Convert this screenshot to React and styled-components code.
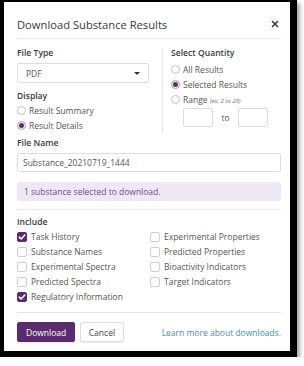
import React from "react";
import styled, { createGlobalStyle } from "styled-components";

const GlobalStyle = createGlobalStyle`
  html, body {
    margin: 0;
    padding: 0;
    background: #ffffff;
  }
  body {
    font-family: "Open Sans", "Liberation Sans", sans-serif;
    color: #555;
  }
`;

const leftOptions = [
  { label: "Task History", checked: true },
  { label: "Substance Names" },
  { label: "Experimental Spectra" },
  { label: "Predicted Spectra" },
  { label: "Regulatory Information", checked: true },
];

const rightOptions = [
  { label: "Experimental Properties" },
  { label: "Predicted Properties" },
  { label: "Bioactivity Indicators" },
  { label: "Target Indicators" },
];

function Radio({ checked, children }) {
  return (
    <RadioRow>
      <RadioDot $checked={checked} />
      <span>{children}</span>
    </RadioRow>
  );
}

function Check({ checked, children }) {
  return (
    <CheckRow>
      <Box $checked={checked}>
        {checked && (
          <svg width="8" height="8" viewBox="0 0 8 8">
            <path d="M1.3 4.2 L3.2 6 L6.8 2" fill="none" stroke="#fff" strokeWidth="1.6" strokeLinecap="round" strokeLinejoin="round" />
          </svg>
        )}
      </Box>
      <span>{children}</span>
    </CheckRow>
  );
}

export default function App() {
  return (
    <>
      <GlobalStyle />
      <Frame>
        <Dialog>
          <Header>
            <Title>Download Substance Results</Title>
            <Close>
              <svg width="8" height="8" viewBox="0 0 8 8">
                <path d="M1 1 L7 7 M7 1 L1 7" stroke="#333" strokeWidth="1.5" />
              </svg>
            </Close>
          </Header>

          <Columns>
            <LeftCol>
              <Label>File Type</Label>
              <Select>
                <span>PDF</span>
                <Caret />
              </Select>
              <Label $top={6}>Display</Label>
              <Radio>Result Summary</Radio>
              <Radio checked>Result Details</Radio>
            </LeftCol>
            <RightCol>
              <Label>Select Quantity</Label>
              <Options>
                <Radio>All Results</Radio>
                <Radio checked>Selected Results</Radio>
                <Radio>
                  Range <Hint>(ex. 2 to 20)</Hint>
                </Radio>
              </Options>
              <RangeRow>
                <RangeBox />
                <To>to</To>
                <RangeBox />
              </RangeRow>
            </RightCol>
          </Columns>

          <Label $top={3}>File Name</Label>
          <TextInput>Substance_20210719_1444</TextInput>
          <Notice>1 substance selected to download.</Notice>
          <Rule $top={8} />

          <Label $top={5}>Include</Label>
          <CheckGrid>
            <CheckCol>
              {leftOptions.map((o, i) => (
                <Check key={i} checked={o.checked}>{o.label}</Check>
              ))}
            </CheckCol>
            <CheckCol>
              {rightOptions.map((o, i) => (
                <Check key={i} checked={o.checked}>{o.label}</Check>
              ))}
            </CheckCol>
          </CheckGrid>
          <Rule $top={8} />

          <Footer>
            <PrimaryBtn>Download</PrimaryBtn>
            <Btn>Cancel</Btn>
            <Link>Learn more about downloads.</Link>
          </Footer>
        </Dialog>
      </Frame>
    </>
  );
}

const Frame = styled.div`
  width: 286px;
  height: 349px;
  border-style: solid;
  border-color: #000;
  border-width: 2px 7px 6px 4px;
  box-shadow: 3px 3px 4px rgba(0, 0, 0, 0.35);
`;

const Dialog = styled.div`
  height: 100%;
  background: #fff;
  padding: 0 9px 0 13px;
  box-sizing: border-box;
  display: flex;
  flex-direction: column;
`;

const Header = styled.div`
  height: 28px;
  padding-top: 8px;
  display: flex;
  align-items: center;
  justify-content: space-between;
  border-bottom: 1px solid #e6e6e6;
`;

const Title = styled.div`
  font-size: 11.2px;
  color: #3a3a3a;
`;

const Close = styled.div`
  display: flex;
  margin-right: 2px;
`;

const Columns = styled.div`
  display: flex;
  padding-top: 7px;
  height: 87px;
`;

const LeftCol = styled.div`
  width: 145px;
  display: flex;
  flex-direction: column;
`;

const RightCol = styled.div`
  flex: 1;
  border-left: 1px solid #e8e8e8;
  margin-top: 2px;
  padding-left: 8px;
  display: flex;
  flex-direction: column;
`;

const Label = styled.div`
  font-size: 8.6px;
  font-weight: 600;
  color: #3a3a3a;
  height: 14px;
  line-height: 14px;
  margin-top: ${(p) => p.$top || 0}px;
  ${RightCol} & {
    margin-top: -2px;
  }
`;

const Select = styled.div`
  margin-top: 3px;
  width: 132px;
  height: 20px;
  box-sizing: border-box;
  border: 1px solid #ddd;
  border-radius: 2px;
  padding: 0 8px;
  display: flex;
  align-items: center;
  justify-content: space-between;
  font-size: 8.5px;
  color: #555;
`;

const Caret = styled.span`
  width: 0;
  height: 0;
  border-left: 3px solid transparent;
  border-right: 3px solid transparent;
  border-top: 3px solid #333;
`;

const Options = styled.div`
  margin-top: 2px;
  display: flex;
  flex-direction: column;
`;

const RadioRow = styled.div`
  height: 15px;
  display: flex;
  align-items: center;
  gap: 3px;
  font-size: 8.5px;
  color: #555;
`;

const RadioDot = styled.span`
  width: 9px;
  height: 9px;
  box-sizing: border-box;
  border-radius: 50%;
  border: 1px solid #c4c4c4;
  background: ${(p) => (p.$checked ? "#5b2b70" : "#fff")};
  box-shadow: ${(p) => (p.$checked ? "inset 0 0 0 1px #fff" : "none")};
`;

const Hint = styled.i`
  font-size: 6px;
  color: #666;
`;

const RangeRow = styled.div`
  margin-top: 1px;
  padding-left: 12px;
  display: flex;
  align-items: center;
`;

const RangeBox = styled.div`
  width: 30px;
  height: 19px;
  box-sizing: border-box;
  border: 1px solid #ddd;
  border-radius: 2px;
`;

const To = styled.span`
  width: 25px;
  text-align: center;
  font-size: 8.5px;
  color: #555;
`;

const TextInput = styled.div`
  margin-top: 3px;
  height: 19px;
  box-sizing: border-box;
  border: 1px solid #ddd;
  border-radius: 2px;
  padding-left: 5px;
  display: flex;
  align-items: center;
  font-size: 8.5px;
  color: #555;
`;

const Notice = styled.div`
  margin-top: 10px;
  height: 19px;
  background: #efe7f3;
  border-radius: 2px;
  padding-left: 7px;
  display: flex;
  align-items: center;
  font-size: 8.5px;
  color: #6f4f83;
`;

const Rule = styled.div`
  margin-top: ${(p) => p.$top}px;
  height: 1px;
  background: #e6e6e6;
`;

const CheckGrid = styled.div`
  display: grid;
  grid-template-columns: 133px 1fr;
`;

const CheckCol = styled.div`
  display: flex;
  flex-direction: column;
`;

const CheckRow = styled.div`
  height: 15px;
  display: flex;
  align-items: center;
  gap: 4px;
  font-size: 8.5px;
  color: #555;
`;

const Box = styled.span`
  width: 10px;
  height: 10px;
  box-sizing: border-box;
  border-radius: 2px;
  border: 1px solid ${(p) => (p.$checked ? "#5b2b70" : "#cfcfcf")};
  background: ${(p) => (p.$checked ? "#5b2b70" : "#fff")};
  display: flex;
  align-items: center;
  justify-content: center;
`;

const Footer = styled.div`
  margin-top: 9px;
  display: flex;
  align-items: center;
  gap: 5px;
`;

const Btn = styled.div`
  height: 20px;
  box-sizing: border-box;
  padding: 0 7.5px;
  border: 1px solid #ddd;
  border-radius: 2px;
  box-shadow: 0 1px 1px rgba(0, 0, 0, 0.08);
  display: flex;
  align-items: center;
  font-size: 8.5px;
  color: #444;
`;

const PrimaryBtn = styled(Btn)`
  background: #5b2b70;
  border-color: #5b2b70;
  color: #fff;
  padding: 0 8px;
`;

const Link = styled.a`
  margin-left: auto;
  font-size: 8.5px;
  color: #3c8dcc;
`;
